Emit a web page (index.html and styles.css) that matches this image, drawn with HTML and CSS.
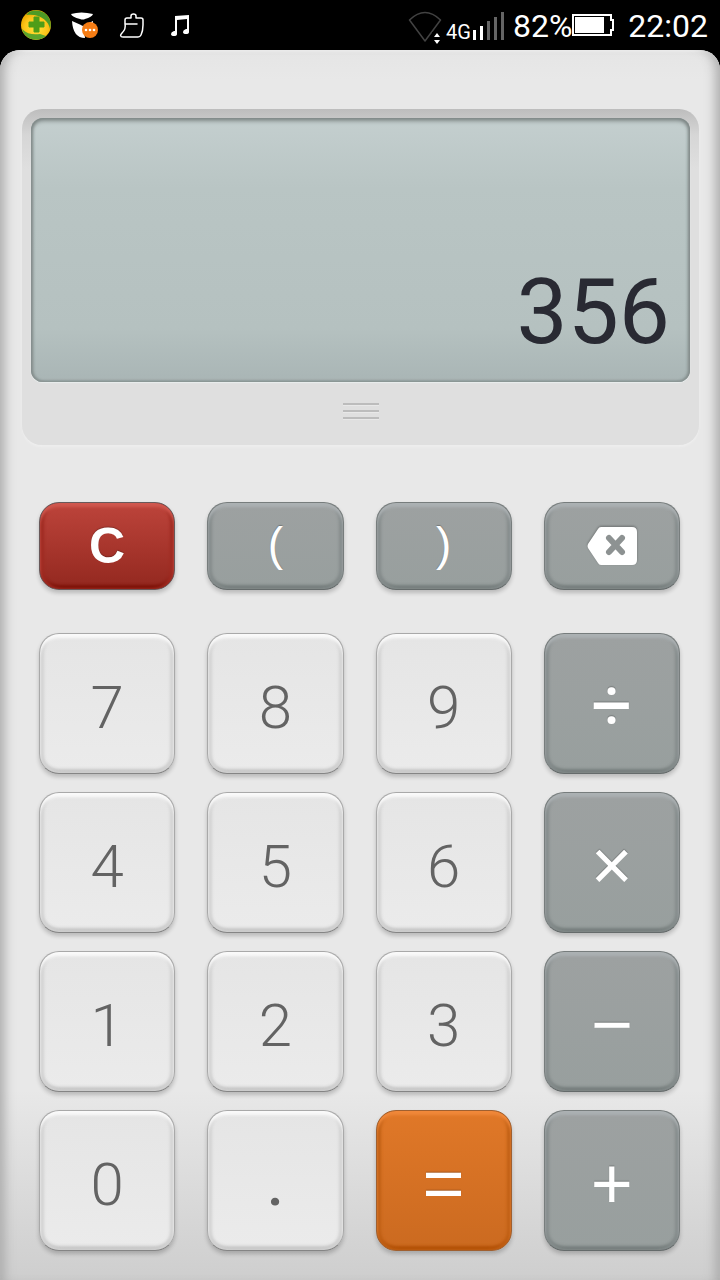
FILE: index.html
```html
<!DOCTYPE html>
<html lang="en">
<head>
<meta charset="utf-8">
<meta name="viewport" content="width=device-width, initial-scale=1">
<title>Calculator</title>
<link rel="stylesheet" href="styles.css">
</head>
<body>
<header class="status">
  <div class="status-notes">
    <svg class="note-icon" viewBox="0 0 32 32" role="img" aria-label="Security">
      <defs>
        <radialGradient id="ball" cx="50%" cy="60%" r="55%"><stop offset="0" stop-color="#ffe63a"/><stop offset="0.7" stop-color="#fcc419"/><stop offset="1" stop-color="#eba900"/></radialGradient>
      </defs>
      <circle cx="16" cy="16" r="15" fill="url(#ball)"/>
      <path d="M9 3C18-1 27 3 30 11c1 4 1 6 0 9C29 12 20 4 6 6z" fill="#4d9a25"/>
      <path d="M2 20c5 5 11 6 18 5l6 2C18 34 5 31 2 20z" fill="#5ba52d"/>
      <path d="M14 8h5v5h5v5h-5v5h-5v-5H9v-5h5z" fill="#4f9d18" stroke="#4f9d18" stroke-linejoin="round"/>
    </svg>
    <svg class="note-icon" viewBox="0 0 32 32" role="img" aria-label="Messages">
      <path d="M3 5q10-3 22 0-1 3-8 5-2 1-5 0Q4 8 3 5z" fill="#fff"/>
      <path d="M4 12l9 4-1 8 5 5Q5 29 4 12zM4 12l11 5 10-5v4l-9 4 1 9Q5 27 4 12z" fill="#fff"/>
      <circle cx="22" cy="21" r="8" fill="#f57c14"/>
      <g fill="#fff"><circle cx="18" cy="21" r="1.3"/><circle cx="22" cy="21" r="1.3"/><circle cx="26" cy="21" r="1.3"/></g>
    </svg>
    <svg class="note-icon" viewBox="0 0 32 32" role="img" aria-label="Cleaner">
      <path d="M9 15v-4q0-2 2-2h4V7q0-2 2.500-2T20 7v2h5q2 0 2 2v5c0 4-1 8-2 10q-1 2-3 2H7c-3 0-3-2-1-4 3-3 4-5 3-9h12" fill="none" stroke="#fff" stroke-width="1.500" stroke-linecap="round" stroke-linejoin="round"/>
    </svg>
    <svg class="note-icon" viewBox="0 0 32 32" role="img" aria-label="Music">
      <path d="M11 7l14-1v17q0 2-3 2t-3-2 3-3h1V10l-10 1v14q0 2-3 2t-3-2 3-3h1z" fill="#fff"/>
    </svg>
  </div>
  <div class="status-system">
    <svg class="wifi-icon" viewBox="0 0 34 36" role="img" aria-label="Wi-Fi">
      <path d="M17 33L1.500 12Q17-3 32.500 12z" fill="none" stroke="#424242" stroke-width="1.500" stroke-linejoin="round"/>
      <path d="M24 24h12v12H24z" fill="#000"/>
      <path d="M26 29h6l-3-4zM26 32h6l-3 4z" fill="#fff"/>
    </svg>
    <span class="network">4G</span>
    <svg class="signal-icon" viewBox="0 0 32 28" role="img" aria-label="Signal">
      <path d="M0 18h3v10H0zM7 14h3v14H7z" fill="#fff"/>
      <path d="M14 9h3v19h-3zM21 5h3v23h-3zM28 0h3v28h-3z" fill="#646464"/>
    </svg>
    <span class="charge">82%</span>
    <svg class="battery-icon" viewBox="0 0 42 22" role="img" aria-label="Battery">
      <path d="M1 1h38v5h2v10h-2v5H1z" fill="none" stroke="#fff" stroke-width="2"/>
      <path d="M3 3h29v16H3z" fill="#fff"/>
    </svg>
    <time class="clock">22:02</time>
  </div>
</header>
<main class="device">
  <section class="panel">
    <output class="screen">356</output>
    <button class="grip" aria-label="Open drawer"><i></i><i></i><i></i></button>
  </section>
  <div class="keys keys-top">
    <button class="key key-clear">C</button>
    <button class="key key-gray key-paren">(</button>
    <button class="key key-gray key-paren">)</button>
    <button class="key key-gray" aria-label="Backspace">
      <svg class="erase-icon" viewBox="0 0 50 38" aria-hidden="true">
        <path fill="#fff" d="M14 0h31q5 0 5 5v28q0 5-5 5H14q-2 0-3-2L1 21q-1-2 0-4L11 2q1-2 3-2z"/>
        <path d="M22 11l13 14M35 11L22 25" stroke="#8d9292" stroke-width="6" stroke-linecap="round"/>
      </svg>
    </button>
  </div>
  <div class="keys keys-main">
    <button class="key key-digit">7</button><button class="key key-digit">8</button><button class="key key-digit">9</button><button class="key key-gray key-op key-divide">÷</button>
    <button class="key key-digit">4</button><button class="key key-digit">5</button><button class="key key-digit">6</button><button class="key key-gray key-op">×</button>
    <button class="key key-digit">1</button><button class="key key-digit">2</button><button class="key key-digit">3</button><button class="key key-gray key-op">−</button>
    <button class="key key-digit">0</button><button class="key key-digit key-point">.</button><button class="key key-equals key-op">=</button><button class="key key-gray key-op">+</button>
  </div>
</main>
</body>
</html>
```
FILE: styles.css
```css
* { box-sizing: border-box; }

body {
  margin: 0;
  min-height: 100vh;
  display: flex;
  flex-direction: column;
  background: #000;
  font-family: Roboto, "Liberation Sans", sans-serif;
}

button {
  border: 0;
  padding: 0;
  font: inherit;
}

.status {
  height: 50px;
  padding: 2px 12px 0 20px;
  display: flex;
  align-items: center;
  justify-content: space-between;
  color: #fff;
  font-size: 32px;
  line-height: 48px;
}

.status-notes { display: flex; gap: 16px; }
.note-icon { width: 32px; height: 32px; margin-top: -2px; }
.status-system { display: flex; align-items: center; }
.wifi-icon { width: 34px; height: 36px; margin-right: 4px; }
.network { font-size: 20px; line-height: 24px; padding-top: 12px; }
.signal-icon { width: 32px; height: 28px; margin: 0 8px 0 2px; }
.battery-icon { width: 42px; height: 22px; margin: 0 14px 2px 0; }

.device {
  flex: 1;
  padding: 59px 21px 28px 22px;
  border-radius: 20px 20px 0 0;
  background: linear-gradient(#e5e5e5, #e8e8e8 30px, #e8e8e8 1040px, #cecece 1230px);
  box-shadow: inset 12px 0 12px -8px #a8a8a8, inset -12px 0 12px -8px #a8a8a8, inset 0 2px 2px #f4f4f4;
}

.panel {
  height: 336px;
  padding: 9px;
  display: flex;
  flex-direction: column;
  border-radius: 20px;
  background: linear-gradient(#bdbdbd, #c6c6c6 9px, #d6d6d6 26px, #dfdfdf 60px);
  box-shadow: 0 2px 2px #eeeeee;
}

.screen {
  height: 264px;
  padding: 0 20px 16px;
  display: flex;
  align-items: flex-end;
  justify-content: flex-end;
  border-radius: 12px;
  background: linear-gradient(#c4cfcf, #b9c5c4 70px, #b5c1c0 210px, #a9b5b5);
  box-shadow: inset 0 3px 4px #7f8887, inset 2px 0 3px #87908f, inset -2px 0 3px #87908f, inset 0 -2px 2px #98a3a3, 0 1px 1px #e9eeee;
  color: #292a33;
  font-size: 91px;
  line-height: 108px;
}

.grip {
  width: 36px;
  margin: 21px auto 0;
  display: flex;
  flex-direction: column;
  gap: 5px;
  background: none;
}
.grip i { height: 2px; background: #bcbcbc; box-shadow: 0 1px 0 #e8e8e8; }

.keys {
  padding: 0 19px 0 17px;
  display: grid;
  grid-template-columns: repeat(4, 1fr);
  column-gap: 32px;
  row-gap: 18px;
}
.keys-top { margin-top: 57px; grid-auto-rows: 88px; }
.keys-main { margin-top: 43px; grid-auto-rows: 141px; }

.key {
  display: flex;
  align-items: center;
  justify-content: center;
  border: 1px solid #a9a9a9;
  border-bottom-color: #858585;
  border-radius: 20px;
  background: linear-gradient(#e5e5e5, #ebebeb);
  box-shadow: inset 0 4px 3px #fafafa, inset 4px 0 3px #d2d2d2, inset -4px 0 3px #d2d2d2, inset 0 -4px 3px #c6c6c6, 0 3px 4px rgba(0, 0, 0, 0.2);
  color: #636363;
  font-size: 60px;
  font-weight: 300;
  line-height: 70px;
}

.key-digit { padding-top: 8px; }
.key-point { font-weight: 500; }

.key-gray,
.key-clear,
.key-equals {
  color: #fff;
  text-shadow: 0 -1px 1px rgba(0, 0, 0, 0.25);
}

.key-gray {
  border-color: #777d7d;
  border-bottom-color: #656b6b;
  background: linear-gradient(#9da1a1, #989f9e);
  box-shadow: inset 0 4px 3px #acb1b3, inset 4px 0 3px #858c8c, inset -4px 0 3px #858c8c, inset 0 -4px 3px #757d7c, 0 3px 4px rgba(0, 0, 0, 0.2);
}

.key-clear {
  border-color: #68595a;
  background: linear-gradient(#bd443b, #93281f);
  box-shadow: inset 0 4px 3px #d0584f, inset 4px 0 3px #9f2b22, inset -4px 0 3px #9f2b22, inset 0 -4px 3px #7d1208, 0 3px 4px rgba(0, 0, 0, 0.2);
  font: bold 50px/56px "Liberation Sans", sans-serif;
}

.key-equals {
  border-color: #a06030;
  background: linear-gradient(#e07828, #cb6a20);
  box-shadow: inset 0 4px 3px #f0883a, inset 4px 0 3px #c06015, inset -4px 0 3px #c06015, inset 0 -4px 3px #b25006, 0 3px 4px rgba(0, 0, 0, 0.2);
}

.key-op { padding-top: 4px; font: 72px/80px "Liberation Sans", sans-serif; }
.key-divide { font-family: Roboto, sans-serif; }
.key-paren { padding-bottom: 4px; font: 46px/56px "Liberation Sans", sans-serif; }
.erase-icon { width: 50px; height: 38px; filter: drop-shadow(0 -1px 1px rgba(0, 0, 0, 0.3)); }
```
